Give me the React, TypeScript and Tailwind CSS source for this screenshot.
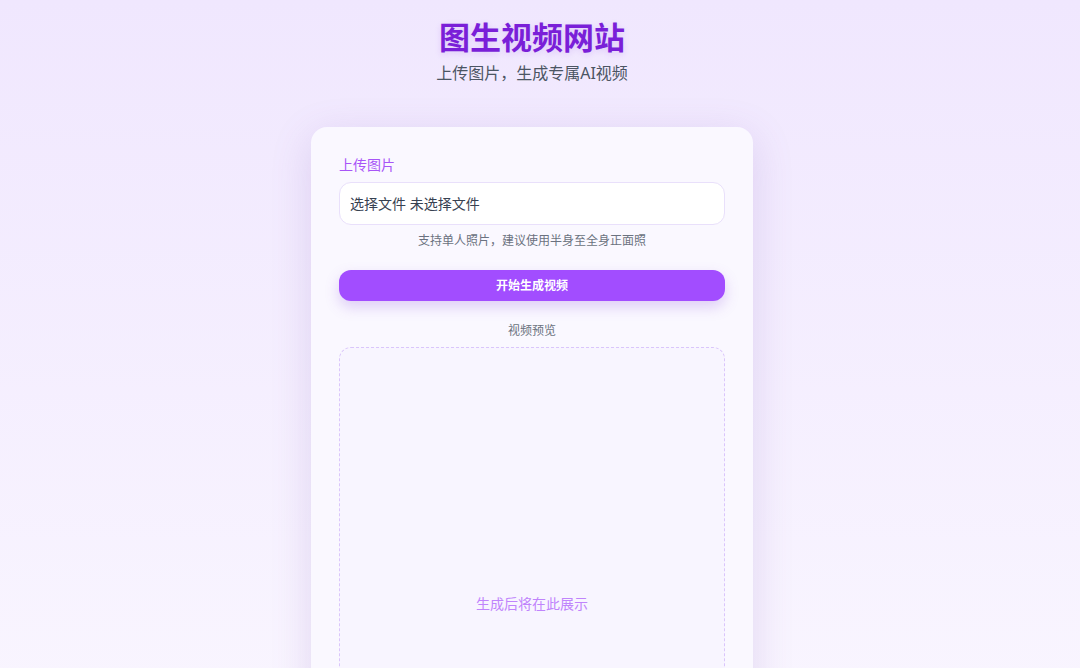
export default function App() {
  return (
    <div
      className="min-h-screen w-full bg-gradient-to-b from-[#f0e7fe] to-[#fcfaff] pt-[17px] pb-10"
      style={{ fontFamily: '"Noto Sans", "Noto Sans CJK SC", sans-serif' }}
    >
      <div className="w-[1064px]">
        {/* Header */}
        <div className="text-center">
          <h1 className="text-[31px] leading-[40px] font-bold text-[#7a1fd8] [text-shadow:0_2px_6px_rgba(122,31,216,0.15)]">
            图生视频网站
          </h1>
          <p className="mt-1 text-base leading-6 text-[#4b5563]">上传图片，生成专属AI视频</p>
        </div>

        {/* Card */}
        <div className="mx-auto mt-[42px] w-[442px] rounded-2xl bg-[#faf8ff] px-7 pt-7 pb-7 shadow-[0_10px_40px_rgba(120,80,180,0.18)]">
          <div className="mb-[7px] text-sm leading-5 text-[#a855f7]">上传图片</div>
          <div className="flex h-[43px] items-center rounded-xl border border-[#e9e0fb] bg-white px-[10px] text-sm text-[#374151]">
            选择文件 未选择文件
          </div>
          <p className="mt-2 text-center text-xs leading-4 text-[#6b7280]">支持单人照片，建议使用半身至全身正面照</p>

          <button className="mt-[21px] h-[31px] w-full rounded-xl bg-[#a24dff] text-xs font-bold text-white shadow-[0_6px_14px_rgba(140,80,220,0.25)]">
            开始生成视频
          </button>

          <p className="mt-[22px] text-center text-xs leading-4 text-[#6b7280]">视频预览</p>
          <div className="mt-2 flex aspect-[3/4] w-full items-center justify-center rounded-xl border border-dashed border-[#dac6fb] bg-[#f8f5ff]">
            <span className="text-sm text-[#c084fc]">生成后将在此展示</span>
          </div>
        </div>
      </div>
    </div>
  );
}
